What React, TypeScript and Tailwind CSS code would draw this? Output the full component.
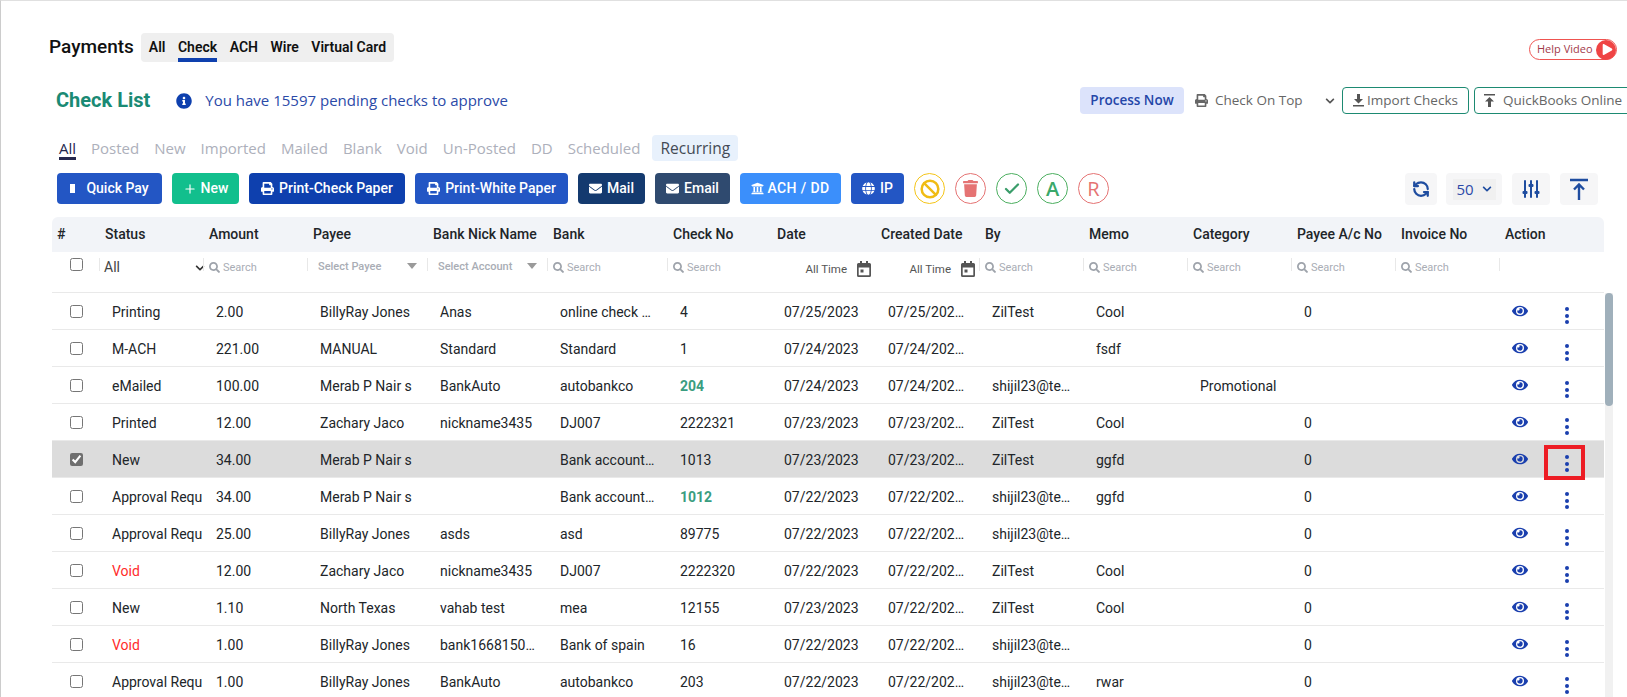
import { Plus, Check, Ban, RefreshCcw } from "lucide-react";
import { FaPrint, FaEnvelope, FaUniversity, FaGlobe, FaInfoCircle, FaSearch, FaEye, FaTrash, FaPlay, FaChevronDown } from "react-icons/fa";

const GRID = "grid grid-cols-[52px_104px_104px_120px_120px_120px_104px_104px_104px_104px_104px_104px_104px_104px_100px]";

const headers = ["#", "Status", "Amount", "Payee", "Bank Nick Name", "Bank", "Check No", "Date", "Created Date", "By", "Memo", "Category", "Payee A/c No", "Invoice No", "Action"];

const statusTabs = ["Posted", "New", "Imported", "Mailed", "Blank", "Void", "Un-Posted", "DD", "Scheduled"];

type Row = {
  status: string;
  amount: string;
  payee: string;
  nick: string;
  bank: string;
  check: string;
  date: string;
  created: string;
  by: string;
  memo: string;
  category?: string;
  acc?: string;
  green?: boolean;
  selected?: boolean;
};

const rows: Row[] = [
  { status: "Printing", amount: "2.00", payee: "BillyRay Jones", nick: "Anas", bank: "online check …", check: "4", date: "07/25/2023", created: "07/25/202…", by: "ZilTest", memo: "Cool", acc: "0" },
  { status: "M-ACH", amount: "221.00", payee: "MANUAL", nick: "Standard", bank: "Standard", check: "1", date: "07/24/2023", created: "07/24/202…", by: "", memo: "fsdf" },
  { status: "eMailed", amount: "100.00", payee: "Merab P Nair s", nick: "BankAuto", bank: "autobankco", check: "204", green: true, date: "07/24/2023", created: "07/24/202…", by: "shijil23@te…", memo: "", category: "Promotional" },
  { status: "Printed", amount: "12.00", payee: "Zachary Jaco", nick: "nickname3435", bank: "DJ007", check: "2222321", date: "07/23/2023", created: "07/23/202…", by: "ZilTest", memo: "Cool", acc: "0" },
  { status: "New", amount: "34.00", payee: "Merab P Nair s", nick: "", bank: "Bank account…", check: "1013", date: "07/23/2023", created: "07/23/202…", by: "ZilTest", memo: "ggfd", acc: "0", selected: true },
  { status: "Approval Requ", amount: "34.00", payee: "Merab P Nair s", nick: "", bank: "Bank account…", check: "1012", green: true, date: "07/22/2023", created: "07/22/202…", by: "shijil23@te…", memo: "ggfd", acc: "0" },
  { status: "Approval Requ", amount: "25.00", payee: "BillyRay Jones", nick: "asds", bank: "asd", check: "89775", date: "07/22/2023", created: "07/22/202…", by: "shijil23@te…", memo: "", acc: "0" },
  { status: "Void", amount: "12.00", payee: "Zachary Jaco", nick: "nickname3435", bank: "DJ007", check: "2222320", date: "07/22/2023", created: "07/22/202…", by: "ZilTest", memo: "Cool", acc: "0" },
  { status: "New", amount: "1.10", payee: "North Texas", nick: "vahab test", bank: "mea", check: "12155", date: "07/23/2023", created: "07/22/202…", by: "ZilTest", memo: "Cool", acc: "0" },
  { status: "Void", amount: "1.00", payee: "BillyRay Jones", nick: "bank1668150…", bank: "Bank of spain", check: "16", date: "07/22/2023", created: "07/22/202…", by: "shijil23@te…", memo: "", acc: "0" },
  { status: "Approval Requ", amount: "1.00", payee: "BillyRay Jones", nick: "BankAuto", bank: "autobankco", check: "203", date: "07/22/2023", created: "07/22/202…", by: "shijil23@te…", memo: "rwar", acc: "0" },
];

function ActionButton({ label, icon, className }: { label: string; icon: React.ReactNode; className: string }) {
  return (
    <button className={`flex h-[31px] items-center justify-center rounded-[4px] text-[14px] font-medium text-white ${className}`}>
      {icon}
      {label}
    </button>
  );
}

function CircleButton({ children, className }: { children: React.ReactNode; className: string }) {
  return <div className={`flex size-[31px] items-center justify-center rounded-full border bg-white ${className}`}>{children}</div>;
}

function ToolBox({ children, className }: { children: React.ReactNode; className: string }) {
  return <div className={`flex h-[32px] items-center justify-center rounded-[4px] bg-[#f6f6f7] text-[#1f4da0] ${className}`}>{children}</div>;
}

function SearchCell() {
  return (
    <div className="-ml-[5px] flex h-[13px] items-start gap-[3px] border-l border-[#e8e8e8] pl-[5px] text-[11px] leading-[20px] text-[#a9adb5]">
      <FaSearch className="mt-[4px] text-[11px] text-[#9ea3ab]" />
      Search
    </div>
  );
}

function SelectCell({ label }: { label: string }) {
  return (
    <div className="-ml-[5px] flex h-[13px] items-start justify-between border-l border-[#e8e8e8] pl-[10px] pr-[15px] text-[11px] font-medium leading-[18px] text-[#a9adb5]">
      {label}
      <svg width="10" height="6" viewBox="0 0 10 6" className="mt-[5px] shrink-0">
        <polygon points="0,0 10,0 5,6" fill="#9a9a9a" />
      </svg>
    </div>
  );
}

function DateCell() {
  return (
    <div className="-ml-[5px] flex h-[13px] items-start justify-end gap-[10px] pr-[9px] text-[11.5px] leading-[22px] text-[#555]">
      All Time
      <svg width="14" height="16" viewBox="0 0 14 16" fill="#555" className="mt-[3px] shrink-0">
        <path d="M3 0h2v2h4V0h2v2h1.500A1.500 1.500 0 0 1 14 3.500v11a1.500 1.500 0 0 1-1.500 1.500h-11A1.500 1.500 0 0 1 0 14.500v-11A1.500 1.500 0 0 1 1.500 2H3zM1.700 6.500v7.800h10.600V6.500z" />
        <rect x="3.500" y="8.500" width="3" height="3" />
      </svg>
    </div>
  );
}

function TableRow({ row }: { row: Row }) {
  const cell = "truncate pl-2 pt-[2px]";
  return (
    <div className={`${GRID} h-[37px] items-center border-b border-[#e9e9e9] text-[14px] text-[#212529] ${row.selected ? "bg-[#dcdcdc]" : "bg-white"}`}>
      <div className="flex pl-[18px]">
        <input type="checkbox" defaultChecked={row.selected} className="size-[13px] accent-[#6f6f6f]" />
      </div>
      <div className={`${cell} ${row.status === "Void" ? "text-[#ff2b2b]" : ""}`}>{row.status}</div>
      <div className={cell}>{row.amount}</div>
      <div className={cell}>{row.payee}</div>
      <div className={cell}>{row.nick}</div>
      <div className={cell}>{row.bank}</div>
      <div className={`${cell} ${row.green ? "font-bold text-[#3a9d80]" : ""}`}>{row.check}</div>
      <div className={cell}>{row.date}</div>
      <div className={cell}>{row.created}</div>
      <div className={cell}>{row.by}</div>
      <div className={cell}>{row.memo}</div>
      <div className={cell}>{row.category}</div>
      <div className={cell}>{row.acc}</div>
      <div className={cell}></div>
      <div className="flex h-full items-start pl-[8px]">
        <FaEye className="mt-[10px] text-[16px] text-[#1a3fae]" />
        <div className="relative ml-[36px] mt-[14px] flex w-[5px] flex-col items-center gap-[2.5px]">
          <span className="size-[4px] rounded-full bg-[#1a3fae]" />
          <span className="size-[4px] rounded-full bg-[#1a3fae]" />
          <span className="size-[4px] rounded-full bg-[#1a3fae]" />
          {row.selected && <span className="absolute left-[-20px] top-[-10px] h-[35px] w-[41px] border-[4px] border-[#ed1c24]" />}
        </div>
      </div>
    </div>
  );
}

export default function App() {
  return (
    <div className="h-[697px] w-[1627px] overflow-hidden border-l border-t border-l-[#cccccc] border-t-[#e0e0e0] bg-white font-['Roboto',sans-serif]">
      <div className="mt-[32px] flex h-[29px] items-center pl-[48px] pr-[10px]">
        <span className="text-[19px] font-medium text-[#111]">Payments</span>
        <div className="ml-[7px] flex h-[29px] items-center gap-[12.5px] rounded-[4px] bg-[#efefef] px-2 text-[14px] font-semibold text-[#111]">
          <span>All</span>
          <span className="flex h-full items-center border-b-[4px] border-[#0e40ae] pt-[4px]">Check</span>
          <span>ACH</span>
          <span>Wire</span>
          <span>Virtual Card</span>
        </div>
        <div className="ml-auto mt-[4px] flex h-[21px] w-[88px] items-center justify-between rounded-full border border-[#ef5350] pl-[7px] font-['Open_Sans',sans-serif] text-[11px] text-[#a33a4a]">
          Help Video
          <span className="flex size-[20px] items-center justify-center rounded-full bg-[#ef4444] pl-[2px]">
            <FaPlay className="text-[11px] text-white" />
          </span>
        </div>
      </div>

      <div className="mt-[25px] flex h-[27px] items-center pl-[55px]">
        <span className="-mt-px text-[20px] font-bold text-[#1a8a74]">Check List</span>
        <FaInfoCircle className="ml-[26px] text-[16px] text-[#0e40ae]" />
        <span className="ml-[13px] font-['Open_Sans',sans-serif] text-[15px] text-[#2b4aa8]">You have 15597 pending checks to approve</span>
        <div className="ml-auto mr-[-7px] flex h-full items-center font-['Open_Sans',sans-serif] text-[13.5px] text-[#666]">
          <div className="flex h-full w-[104px] items-center justify-center rounded-[4px] bg-[#dce3fb] font-semibold text-[#2446a8]">Process Now</div>
          <FaPrint className="ml-[11px] text-[13px] text-[#666]" />
          <span className="ml-[7px] w-[110px]">Check On Top</span>
          <FaChevronDown className="text-[10px] text-[#555]" />
          <div className="ml-[7px] flex h-full w-[127px] items-center justify-center gap-[3px] rounded-[4px] border border-[#1d8a72]">
            <svg width="11" height="13" viewBox="0 0 11 13" fill="#555">
              <path d="M4 0h3v5h3L5.500 9.500 1 5h3zM0 11h11v1.500H0z" />
            </svg>
            Import Checks
          </div>
          <div className="ml-[5px] flex h-full w-[160px] items-center gap-[8px] rounded-[4px] border border-[#1d8a72] pl-[9px]">
            <svg width="11" height="13" viewBox="0 0 11 13" fill="#555">
              <path d="M0 0h11v1.500H0zM5.500 3 10 7.500H7V13H4V7.500H1z" />
            </svg>
            QuickBooks Online
          </div>
        </div>
      </div>

      <div className="mt-[21px] flex h-[26px] items-start gap-[15px] pl-[58px] font-['Open_Sans',sans-serif] text-[15px] font-medium text-[#adb0bb]">
        <span className="h-[25px] border-b-[3px] border-[#25284d] pt-[2px] text-[#25284d]">All</span>
        {statusTabs.map((tab) => (
          <span key={tab} className="pt-[2px]">{tab}</span>
        ))}
        <span className="-ml-[3px] h-[26px] rounded-[4px] bg-[#e8f1fc] px-[8px] pt-[2px] text-[15.5px] text-[#444a55]">Recurring</span>
      </div>

      <div className="mt-[12px] flex h-[31px] items-start pl-[56px] pr-[29px]">
        <div className="flex items-center gap-[10px]">
          <ActionButton label="Quick Pay" className="w-[105px] gap-[11px] bg-[#2356c4]" icon={<span className="h-[9px] w-[5px] bg-white" />} />
          <ActionButton label="New" className="w-[67px] gap-[4px] bg-[#12bf8d]" icon={<Plus size={14} />} />
          <ActionButton label="Print-Check Paper" className="w-[156px] gap-[5px] bg-[#0e40ae]" icon={<FaPrint className="text-[13px]" />} />
          <ActionButton label="Print-White Paper" className="w-[153px] gap-[5px] bg-[#2356c4]" icon={<FaPrint className="text-[13px]" />} />
          <ActionButton label="Mail" className="w-[67px] gap-[5px] bg-[#143a6f]" icon={<FaEnvelope className="text-[13px]" />} />
          <ActionButton label="Email" className="w-[75px] gap-[5px] bg-[#2f4a6f]" icon={<FaEnvelope className="text-[13px]" />} />
          <ActionButton label="ACH / DD" className="w-[101px] gap-[3px] bg-[#3b8ffb] tracking-[0.4px]" icon={<FaUniversity className="text-[13px]" />} />
          <ActionButton label="IP" className="w-[53px] gap-[5px] bg-[#2356c4]" icon={<FaGlobe className="text-[13px]" />} />
          <CircleButton className="border-[#f5c518]">
            <Ban size={20} strokeWidth={3} className="text-[#f0bc14]" />
          </CircleButton>
          <CircleButton className="border-[#e57373]">
            <FaTrash className="text-[17px] text-[#e57373]" />
          </CircleButton>
          <CircleButton className="border-[#4caf60]">
            <Check size={18} strokeWidth={3} className="text-[#3a9d6a]" />
          </CircleButton>
          <CircleButton className="border-[#4caf60]">
            <span className="font-['Open_Sans',sans-serif] text-[20px] font-semibold text-[#3aa86a]">A</span>
          </CircleButton>
          <CircleButton className="border-[#e57373]">
            <span className="font-['Open_Sans',sans-serif] text-[20px] font-medium text-[#e57373]">R</span>
          </CircleButton>
        </div>
        <div className="ml-auto flex items-center">
          <ToolBox className="w-[32px]">
            <RefreshCcw size={18} strokeWidth={3} />
          </ToolBox>
          <ToolBox className="ml-[9px] w-[56px]">
            <div className="flex h-[21px] w-[43px] items-center justify-between bg-[#f0f0f0] px-[4px] font-['Open_Sans',sans-serif] text-[15px] text-[#2b4aa8]">
              50
              <FaChevronDown className="text-[10px] text-[#1f4da0]" />
            </div>
          </ToolBox>
          <ToolBox className="ml-[10px] w-[38px]">
            <svg width="18" height="18" viewBox="0 0 18 18" fill="currentColor">
              <rect x="2" y="0" width="2" height="18" rx="1" />
              <rect x="8" y="0" width="2" height="18" rx="1" />
              <rect x="14" y="0" width="2" height="18" rx="1" />
              <rect x="0.500" y="11" width="5" height="3" rx="1" />
              <rect x="6.500" y="4" width="5" height="3" rx="1" />
              <rect x="12.500" y="11" width="5" height="3" rx="1" />
            </svg>
          </ToolBox>
          <ToolBox className="ml-[10px] w-[38px]">
            <svg width="20" height="22" viewBox="0 0 20 22" fill="none" stroke="currentColor" strokeWidth="2.400">
              <path d="M1 2h18M10 22V7M5 11.500 10 6.500l5 5" />
            </svg>
          </ToolBox>
        </div>
      </div>

      <div className="ml-[51px] mt-[13px] w-[1562px]">
        <div className={`${GRID} h-[35px] w-[1552px] items-center rounded-t-[6px] bg-[#f2f4f8] text-[14px] font-medium text-[#212529]`}>
          {headers.map((h, i) => (
            <div key={h} className={i === 0 ? "pl-[5px]" : "pl-px"}>{h}</div>
          ))}
        </div>
        <div className={`${GRID} h-[41px] w-[1552px] border-b border-[#e9e9e9] pt-[6px] text-[14px] text-[#444]`}>
          <div className="flex pl-[18px]">
            <input type="checkbox" className="size-[13px]" />
          </div>
          <div className="-ml-[5px] flex h-[13px] items-start justify-between border-l border-[#e8e8e8] pl-[4px] pr-[3px] leading-[18px]">
            All
            <FaChevronDown className="mt-[5px] text-[10px] text-[#333]" />
          </div>
          <SearchCell />
          <SelectCell label="Select Payee" />
          <SelectCell label="Select Account" />
          <SearchCell />
          <SearchCell />
          <DateCell />
          <DateCell />
          <SearchCell />
          <SearchCell />
          <SearchCell />
          <SearchCell />
          <SearchCell />
          <div className="-ml-[5px] h-[13px] border-l border-[#e8e8e8]" />
        </div>
        <div className="flex items-start">
          <div className="w-[1552px] shrink-0">
            {rows.map((row, i) => (
              <TableRow key={i} row={row} />
            ))}
          </div>
          <div className="ml-px h-[405px] w-[8px] shrink-0 bg-[#f1f1f1]">
            <div className="h-[113px] w-full rounded-[4px] bg-[#a0b0bb]" />
          </div>
        </div>
      </div>
    </div>
  );
}
